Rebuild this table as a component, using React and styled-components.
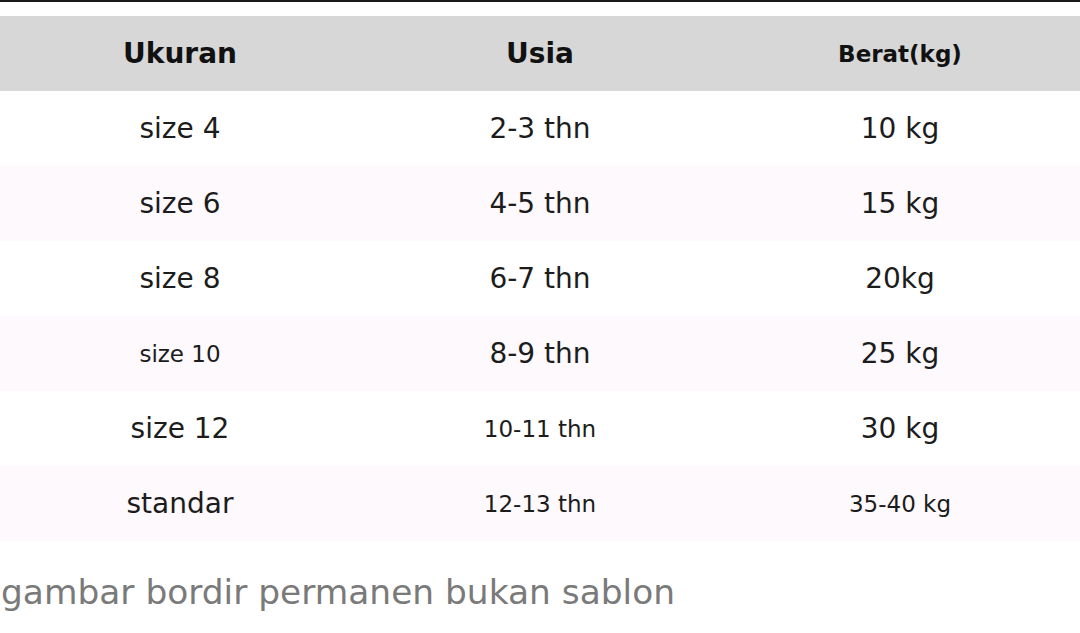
import React from 'react';
import styled, { createGlobalStyle } from 'styled-components';

const GlobalStyle = createGlobalStyle`
  html, body {
    margin: 0;
    padding: 0;
    background: #ffffff;
  }
  body {
    font-family: "DejaVu Sans", "Noto Sans", sans-serif;
    color: #1c1c1c;
  }
`;

const Page = styled.div`
  width: 1080px;
  height: 633px;
  overflow: hidden;
  background: #ffffff;
`;

const TopRule = styled.div`
  height: 2px;
  background: #1a1a1a;
  margin-bottom: 14px;
`;

const Table = styled.div`
  display: flex;
  flex-direction: column;
`;

const Row = styled.div`
  display: grid;
  grid-template-columns: repeat(3, 1fr);
  height: 75px;
  align-items: center;
  background: ${(p) => (p.$head ? '#d7d7d7' : p.$striped ? '#fdf9fc' : '#ffffff')};
`;

const Cell = styled.div`
  text-align: center;
  font-size: ${(p) => (p.$small ? '23px' : '28px')};
  font-weight: ${(p) => (p.$bold ? 700 : 400)};
  color: ${(p) => (p.$bold ? '#111111' : '#1c1c1c')};
  white-space: nowrap;
`;

const Note = styled.p`
  margin: 31px 0 0 1px;
  font-size: 34.4px;
  line-height: 40px;
  color: #7a7a7a;
  white-space: nowrap;
`;

const rows = [
  [['size 4'], ['2-3 thn'], ['10 kg']],
  [['size 6'], ['4-5 thn'], ['15 kg']],
  [['size 8'], ['6-7 thn'], ['20kg']],
  [['size 10', true], ['8-9 thn'], ['25 kg']],
  [['size 12'], ['10-11 thn', true], ['30 kg']],
  [['standar'], ['12-13 thn', true], ['35-40 kg', true]],
];

const App = () => {
  return (
    <Page>
      <GlobalStyle />
      <TopRule />
      <Table>
        <Row $head>
          <Cell $bold>Ukuran</Cell>
          <Cell $bold>Usia</Cell>
          <Cell $bold $small>Berat(kg)</Cell>
        </Row>
        {rows.map((r, i) => (
          <Row key={i} $striped={i % 2 === 1}>
            {r.map(([text, small], j) => (
              <Cell key={j} $small={small}>{text}</Cell>
            ))}
          </Row>
        ))}
      </Table>
      <Note>gambar bordir permanen bukan sablon</Note>
    </Page>
  );
};

export default App;
